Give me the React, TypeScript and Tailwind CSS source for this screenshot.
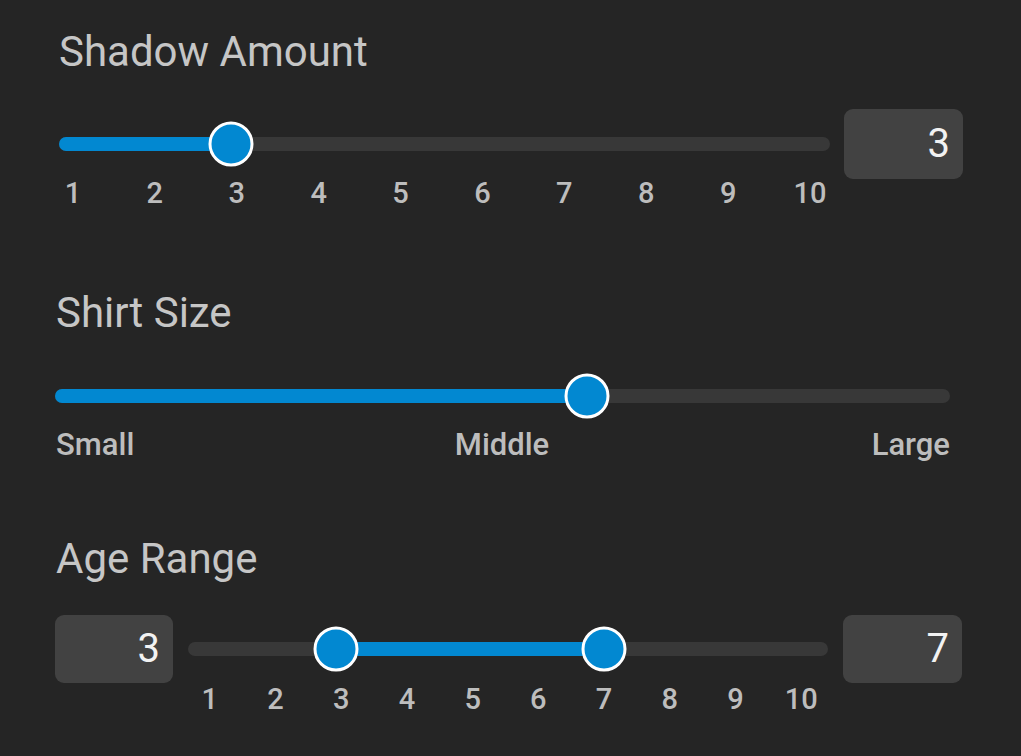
import React from 'react';

const font = { fontFamily: 'Roboto, "Noto Sans", sans-serif' };

type TrackProps = {
  width: number;
  from?: number; // percent
  to: number; // percent
  thumbs: number[]; // percent
};

const Track = ({ width, from = 0, to, thumbs }: TrackProps) => {
  return (
    <div className="relative h-[14px] rounded-full bg-[#383838]" style={{ width }}>
      <div
        className="absolute top-0 h-full rounded-full bg-[#0288d1]"
        style={{ left: `${from}%`, width: `${to - from}%` }}
      />
      {thumbs.map((t) => (
        <div
          key={t}
          className="absolute top-1/2 h-[45px] w-[45px] -translate-x-1/2 -translate-y-1/2 rounded-full border-[3px] border-white bg-[#0288d1]"
          style={{ left: `${t}%` }}
        />
      ))}
    </div>
  );
};

const ValueBox = ({ value, w, h }: { value: string; w: string; h: string }) => (
  <div
    className={`flex ${w} ${h} shrink-0 items-center justify-end rounded-[9px] bg-[#424242] pr-[13px] text-[40px] leading-none text-[#f2f2f2]`}
  >
    {value}
  </div>
);

const ticks = ['1', '2', '3', '4', '5', '6', '7', '8', '9', '10'];

export default function App() {
  return (
    <div className="h-[756px] w-[1021px] overflow-hidden bg-[#252525]" style={font}>
      {/* Shadow Amount */}
      <section className="pl-[59px] pt-[27px]">
        <h2 className="text-[42px] leading-[50px] font-normal text-[#c6c6c6]">Shadow Amount</h2>
        <div className="mt-[32px] flex items-start gap-[14px]">
          <div className="flex w-[771px] flex-col">
            <div className="flex h-[70px] items-center">
              <Track width={771} to={22.3} thumbs={[22.3]} />
            </div>
            <div className="-mt-[3px] ml-[-27px] grid w-[819px] grid-cols-10 text-center text-[29px] leading-[34px] font-medium text-[#bdbdbd]">
              {ticks.map((t) => (
                <span key={t}>{t}</span>
              ))}
            </div>
          </div>
          <ValueBox value="3" w="w-[119px]" h="h-[70px]" />
        </div>
      </section>

      {/* Shirt Size */}
      <section className="mt-[78px] pl-[55px]">
        <h2 className="pl-[1px] text-[42px] leading-[50px] font-normal text-[#c6c6c6]">Shirt Size</h2>
        <div className="mt-[36px] flex h-[44px] items-center">
          <Track width={895} to={59.4} thumbs={[59.4]} />
        </div>
        <div className="mt-[9px] flex w-[895px] items-center justify-between pl-[1px] text-[31px] leading-[36px] font-medium text-[#bdbdbd]">
          <span className="w-[200px]">Small</span>
          <span className="pr-[2px]">Middle</span>
          <span className="w-[200px] text-right">Large</span>
        </div>
      </section>

      {/* Age Range */}
      <section className="mt-[71px] pl-[55px]">
        <h2 className="pl-[1px] text-[42px] leading-[50px] font-normal text-[#c6c6c6]">Age Range</h2>
        <div className="mt-[31px] flex items-start gap-[15px]">
          <ValueBox value="3" w="w-[118px]" h="h-[68px]" />
          <div className="flex w-[640px] flex-col">
            <div className="flex h-[68px] items-center">
              <Track width={640} from={23.1} to={65} thumbs={[23.1, 65]} />
            </div>
            <div className="-mt-[1px] ml-[-11px] grid w-[657px] grid-cols-10 text-center text-[29px] leading-[34px] font-medium text-[#bdbdbd]">
              {ticks.map((t) => (
                <span key={t}>{t}</span>
              ))}
            </div>
          </div>
          <ValueBox value="7" w="w-[119px]" h="h-[68px]" />
        </div>
      </section>
    </div>
  );
}
